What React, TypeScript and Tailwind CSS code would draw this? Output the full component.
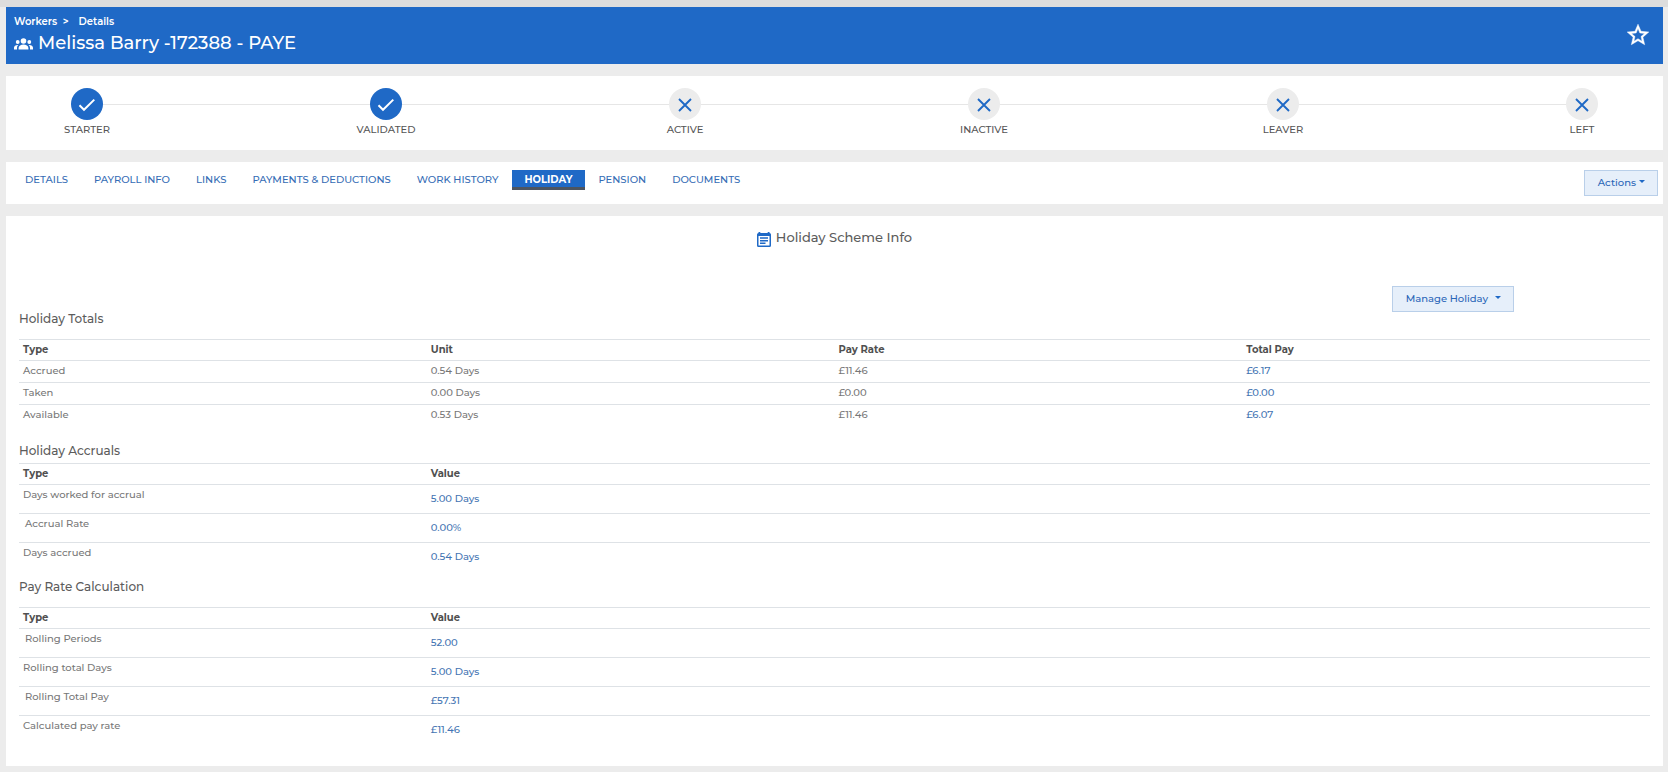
import clsx from "clsx"

const steps = [
  { label: "STARTER", done: true },
  { label: "VALIDATED", done: true },
  { label: "ACTIVE", done: false },
  { label: "INACTIVE", done: false },
  { label: "LEAVER", done: false },
  { label: "LEFT", done: false },
]

const tabs = [
  "DETAILS",
  "PAYROLL INFO",
  "LINKS",
  "PAYMENTS & DEDUCTIONS",
  "WORK HISTORY",
  "HOLIDAY",
  "PENSION",
  "DOCUMENTS",
]

const totals = [
  { type: "Accrued", unit: "0.54 Days", rate: "£11.46", total: "£6.17" },
  { type: "Taken", unit: "0.00 Days", rate: "£0.00", total: "£0.00" },
  { type: "Available", unit: "0.53 Days", rate: "£11.46", total: "£6.07" },
]

type ValueRow = { type: string; value: string; indent?: boolean }

const accruals: ValueRow[] = [
  { type: "Days worked for accrual", value: "5.00 Days" },
  { type: "Accrual Rate", value: "0.00%", indent: true },
  { type: "Days accrued", value: "0.54 Days" },
]

const payRates: ValueRow[] = [
  { type: "Rolling Periods", value: "52.00", indent: true },
  { type: "Rolling total Days", value: "5.00 Days" },
  { type: "Rolling Total Pay", value: "£57.31", indent: true },
  { type: "Calculated pay rate", value: "£11.46" },
]

function Caret() {
  return <span className="mb-0.5 border-x-3 border-t-3 border-x-transparent border-t-[#1f69c6]" />
}

function PeopleIcon() {
  return (
    <svg viewBox="0 0 19 12" className="h-3 w-[19px]" fill="currentColor" aria-hidden="true">
      <circle cx="9.5" cy="3" r="2.800" />
      <circle cx="3.700" cy="4" r="1.900" />
      <circle cx="15.300" cy="4" r="1.900" />
      <path d="M4.600 11.500V10c0-2.200 2.400-3.400 4.900-3.400s4.900 1.200 4.900 3.400v1.500z" />
      <path d="M0 11.500V9.700c0-1.700 1.700-2.900 4.300-2.700-.9.800-1.300 1.800-1.300 3v1.500zM19 11.500V9.700c0-1.700-1.700-2.900-4.300-2.700.9.800 1.300 1.800 1.300 3v1.500z" />
    </svg>
  )
}

function StarIcon() {
  return (
    <svg viewBox="0 0 24 24" className="size-[26px]" fill="currentColor" stroke="currentColor" strokeWidth="0.4" aria-hidden="true">
      <path d="M22 9.240l-7.190-.62L12 2 9.190 8.630 2 9.240l5.460 4.730L5.820 21 12 17.270 18.180 21l-1.630-7.030L22 9.240zM12 15.400l-3.760 2.270 1-4.280-3.320-2.880 4.380-.38L12 6.100l1.710 4.040 4.380.38-3.320 2.880 1 4.280L12 15.400z" />
    </svg>
  )
}

function CheckIcon() {
  return (
    <svg viewBox="0 0 20 20" className="size-5" fill="none" stroke="currentColor" strokeWidth="2" aria-hidden="true">
      <path d="M2.500 10.300 7 14.800 17.300 4.600" />
    </svg>
  )
}

function CrossIcon() {
  return (
    <svg viewBox="0 0 20 20" className="size-5" fill="none" stroke="currentColor" strokeWidth="1.9" aria-hidden="true">
      <path d="M4 4 16 16M16 4 4 16" />
    </svg>
  )
}

function NoteIcon() {
  return (
    <svg viewBox="0 0 14 15" className="h-[15px] w-[14px] text-[#1f69c6]" fill="currentColor" aria-hidden="true">
      <path
        fillRule="evenodd"
        d="M1.500 0h1.800v1h7.400V0h1.800v1A1.500 1.500 0 0 1 14 2.500v11a1.500 1.500 0 0 1-1.500 1.500h-11A1.500 1.500 0 0 1 0 13.500v-11A1.500 1.500 0 0 1 1.500 1zM1.500 4v9.500h11V4zM3 5.300h8v1.500H3zM3 7.900h8v1.500H3zM3 10.500h5.500V12H3z"
      />
    </svg>
  )
}

function Step({ label, done, first, last }: { label: string; done: boolean; first: boolean; last: boolean }) {
  return (
    <li className={clsx("flex", !first && "flex-1")}>
      {!first && <div className="mt-4 h-px flex-1 bg-[#e6e6e6]" />}
      <div className="w-24">
        <div className="flex items-start">
          <div className={clsx("mt-4 h-px flex-1", !first && "bg-[#e6e6e6]")} />
          <div
            className={clsx(
              "flex size-8 items-center justify-center rounded-full pt-px",
              done ? "bg-[#1f69c6] text-white" : "bg-[#ececec] text-[#1f69c6]"
            )}
          >
            {done ? <CheckIcon /> : <CrossIcon />}
          </div>
          <div className={clsx("mt-4 h-px flex-1", !last && "bg-[#e6e6e6]")} />
        </div>
        <p className="pt-0.5 text-center text-[10px] leading-4 font-medium text-[#555]">{label}</p>
      </div>
    </li>
  )
}

function ValueTable({ name, rows }: { name: string; rows: ValueRow[] }) {
  return (
    <table aria-label={name} className="w-full table-fixed text-left text-[10px] leading-4">
      <thead>
        <tr className="h-[21px] border-t border-[#dee2e6] text-[#505050]">
          <th className="w-1/4 px-1 font-bold">Type</th>
          <th className="px-1 font-bold">Value</th>
        </tr>
      </thead>
      <tbody className="font-medium">
        {rows.map(row => (
          <tr key={row.type} className="h-[29px] border-t border-[#dee2e6] align-top">
            <td className={clsx("pt-0.5 pr-1 text-[#777]", row.indent ? "pl-1.5" : "pl-1")}>{row.type}</td>
            <td className="px-1 pt-1.5">
              <a href="#" className="text-[#4475b3]">{row.value}</a>
            </td>
          </tr>
        ))}
      </tbody>
    </table>
  )
}

export default function App() {
  return (
    <div className="min-h-screen border-t-7 border-[#dddddd] bg-[#ececec] pr-[5px] pb-1.5 pl-1.5 font-['Montserrat','Inter',sans-serif]">
      <header className="flex justify-between bg-[#1f69c6] pt-[7px] pr-3 pb-[7px] pl-2 text-white">
        <div>
          <nav aria-label="Breadcrumb" className="flex gap-2.5 text-[10px] leading-4 font-semibold">
            <a href="#">Workers&nbsp; &gt;</a>
            <a href="#">Details</a>
          </nav>
          <h1 className="flex items-center gap-[5px] text-[18px] leading-[27px] font-medium">
            <PeopleIcon />
            Melissa Barry -172388 - PAYE
          </h1>
        </div>
        <button aria-label="Add to favourites" className="pb-0.5">
          <StarIcon />
        </button>
      </header>

      <ol className="mt-3 flex bg-white px-[33px] py-3">
        {steps.map((step, i) => (
          <Step key={step.label} {...step} first={i === 0} last={i === steps.length - 1} />
        ))}
      </ol>

      <div className="mt-3 flex items-start justify-between bg-white py-2 pr-[5px] pl-1.5">
        <nav className="flex text-[10px] leading-[15px] font-medium">
          {tabs.map(tab => (
            <a
              key={tab}
              href="#"
              className={clsx(
                "border-b-3 px-[13px] pt-0.5",
                tab === "HOLIDAY"
                  ? "border-[#4d5560] bg-[#1f69c6] font-bold text-white"
                  : "border-transparent text-[#356cb5]"
              )}
            >
              {tab}
            </a>
          ))}
        </nav>
        <button className="flex h-[26px] items-center gap-[3px] border border-[#b9cfe9] bg-[#e6effa] pr-3 pb-0.5 pl-[13px] text-[10px] font-medium text-[#2a66b8]">
          Actions
          <Caret />
        </button>
      </div>

      <main className="mt-3 bg-white px-[13px] pt-3 pb-[21px] text-[#5c5c5c]">
        <h2 className="flex items-end justify-center gap-[5px] text-[13px] leading-[19px] font-medium">
          <NoteIcon />
          Holiday Scheme Info
        </h2>
        <div className="mt-[39px] flex justify-end pr-[136px]">
          <button className="flex h-[26px] items-center gap-[7px] border border-[#b9cfe9] bg-[#e6effa] pr-3 pb-0.5 pl-[13px] text-[10px] font-medium text-[#2a66b8]">
            Manage Holiday
            <Caret />
          </button>
        </div>

        <h3 className="-mt-px text-xs leading-4 font-medium">Holiday Totals</h3>
        <table aria-label="Holiday Totals" className="mt-3 w-full table-fixed text-left text-[10px] leading-4">
          <thead>
            <tr className="h-[21px] border-t border-[#dee2e6] text-[#505050]">
              <th className="px-1 font-bold">Type</th>
              <th className="px-1 font-bold">Unit</th>
              <th className="px-1 font-bold">Pay Rate</th>
              <th className="px-1 font-bold">Total Pay</th>
            </tr>
          </thead>
          <tbody className="font-medium text-[#777]">
            {totals.map(row => (
              <tr key={row.type} className="h-[22px] border-t border-[#dee2e6] align-top">
                <td className="px-1 pt-0.5">{row.type}</td>
                <td className="px-1 pt-0.5">{row.unit}</td>
                <td className="px-1 pt-0.5">{row.rate}</td>
                <td className="px-1 pt-0.5">
                  <a href="#" className="text-[#4475b3]">{row.total}</a>
                </td>
              </tr>
            ))}
          </tbody>
        </table>

        <h3 className="mt-4 mb-1 text-xs leading-4 font-medium">Holiday Accruals</h3>
        <ValueTable name="Holiday Accruals" rows={accruals} />

        <h3 className="mt-2 mb-3 text-xs leading-4 font-medium">Pay Rate Calculation</h3>
        <ValueTable name="Pay Rate Calculation" rows={payRates} />
      </main>
    </div>
  )
}
